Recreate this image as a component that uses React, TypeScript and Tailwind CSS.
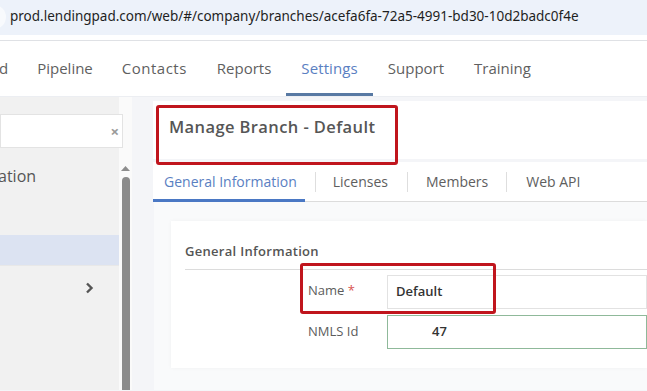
import React from "react";

export default function App() {
  const font = { fontFamily: '"Open Sans", "Noto Sans", sans-serif' };
  return (
    <div className="relative w-[647px] h-[391px] overflow-hidden bg-[#f4f5f8]" style={font}>
      {/* browser address bar */}
      <div className="h-[41px] bg-white border-b border-[#dfe1e5] relative">
        <div className="absolute left-[-20px] top-[-2px] h-[37px] w-[700px] rounded-full bg-[#edf2fa] flex items-center">
          <div className="w-[24px] h-[24px] rounded-full bg-[#f8fafd] ml-[2px]" />
          <span className="ml-[4px] text-[13.5px] text-[#1f1f1f]" style={{ fontFamily: '"Noto Sans", "Open Sans", sans-serif' }}>
            prod.lendingpad.com/web/#/company/branches/acefa6fa-72a5-4991-bd30-10d2badc0f4e
          </span>
        </div>
      </div>
      {/* nav */}
      <div className="h-[56px] bg-white flex items-stretch text-[15px] text-[#5f5f5f] border-b border-[#eceef2]">
        <div className="flex items-center ml-[-1px] mr-[29px]">d</div>
        <div className="flex items-center mr-[29px]">Pipeline</div>
        <div className="flex items-center mr-[30px] tracking-[0.5px]">Contacts</div>
        <div className="flex items-center mr-[15px]">Reports</div>
        <div className="relative flex items-center px-[15px] text-[#5a80c2] tracking-[0.1px]">
          Settings
          <div className="absolute left-0 right-0 bottom-0 h-[3px] bg-[#5879a3]" />
        </div>
        <div className="flex items-center ml-[15px] mr-[30px]">Support</div>
        <div className="flex items-center">Training</div>
      </div>
      {/* body */}
      <div className="flex h-[293px]">
        {/* sidebar */}
        <div className="w-[119px] bg-[#f1f1f1] flex flex-col shrink-0">
          <div className="mt-[17px] h-[34px] w-[123px] bg-white border border-[#e3e3e3] flex items-center justify-end pr-[3px] relative z-10">
            <span className="text-[#9a9a9a] text-[15px] font-bold leading-none">×</span>
          </div>
          <div className="mt-[18px] text-[16px] text-[#555] leading-[20px] ml-[-2px]">ation</div>
          <div className="mt-[49px] h-[30px] bg-[#dce3f2]" />
          <div className="h-[44px] flex items-center justify-end pr-[25px] border-t border-[#e8e8e8]">
            <svg width="9" height="12" viewBox="0 0 9 12">
              <path d="M2 1.5 L6.5 6 L2 10.5" fill="none" stroke="#555" strokeWidth="2.4" />
            </svg>
          </div>
        </div>
        {/* scrollbar */}
        <div className="w-[13px] bg-[#fafafa] shrink-0 flex flex-col items-center pt-[68px]">
          <svg width="9" height="6" viewBox="0 0 9 6"><path d="M0 6 L4.5 1 L9 6 Z" fill="#8d8d8d" /></svg>
          <div className="mt-[6px] w-[8px] flex-1 rounded-t-full bg-[#8b8b8b]" />
        </div>
        <div className="w-[21px] shrink-0 bg-[#f4f5f8]" />
        {/* main */}
        <div className="flex-1 flex flex-col pt-[4px] min-w-0">
          <div className="h-[58px] bg-white flex items-start pl-[16px] pt-[14px]">
            <span className="text-[16.5px] font-semibold text-[#565656] tracking-[0.4px]">Manage Branch - Default</span>
          </div>
          <div className="mt-[3px] h-[40px] bg-white flex items-stretch text-[14px] text-[#5e5e5e] border-b border-[#dcdcdc]">
            <div className="relative flex items-center pl-[11px] pr-[8px] text-[#5a80c2]">
              General Information
              <div className="absolute left-0 right-0 bottom-[-1px] h-[3px] bg-[#4a78c4]" />
            </div>
            <div className="flex items-center"><div className="w-px h-[20px] bg-[#dedede] ml-[10px]" /></div>
            <div className="flex items-center pl-[17px] pr-[19px]">Licenses</div>
            <div className="flex items-center"><div className="w-px h-[20px] bg-[#dedede]" /></div>
            <div className="flex items-center px-[18px]">Members</div>
            <div className="flex items-center"><div className="w-px h-[20px] bg-[#dedede]" /></div>
            <div className="flex items-center px-[19px]">Web API</div>
          </div>
          <div className="flex-1 bg-[#f9fafb] pl-[17px] pt-[19px] ml-[1px]">
            <div className="bg-white h-[147px] shadow-[0_0_4px_rgba(0,0,0,0.04)] pl-[14px] pt-[21px]">
              <div className="text-[13px] font-semibold text-[#555] leading-[18px] tracking-[0.3px]">General Information</div>
              <div className="mt-[9px] h-px bg-[#dcdcdc]" />
              <div className="mt-[5px] flex items-center h-[34px]">
                <div className="w-[202px] pl-[123px] text-[13px] text-[#5c5c5c] pb-[2px]">
                  Name <span className="text-[#d9534f]">*</span>
                </div>
                <div className="flex-1 h-[34px] border border-[#e2e2e2] flex items-center pl-[8px] text-[13px] font-semibold text-[#333]">
                  Default
                </div>
              </div>
              <div className="mt-[6px] flex items-center h-[34px]">
                <div className="w-[202px] pl-[123px] text-[13px] text-[#5c5c5c]">NMLS Id</div>
                <div className="flex-1 h-[34px] border border-[#8fb99a] flex items-center pl-[44px] text-[13px] font-semibold text-[#333]">
                  47
                </div>
              </div>
            </div>
          </div>
        </div>
      </div>
      {/* red annotation boxes */}
      <div className="absolute left-[156px] top-[105px] w-[242px] h-[60px] border-[3px] border-[#c0151d] rounded-[3px]" />
      <div className="absolute left-[300px] top-[263px] w-[196px] h-[51px] border-[3px] border-[#c0151d] rounded-[3px]" />
    </div>
  );
}
